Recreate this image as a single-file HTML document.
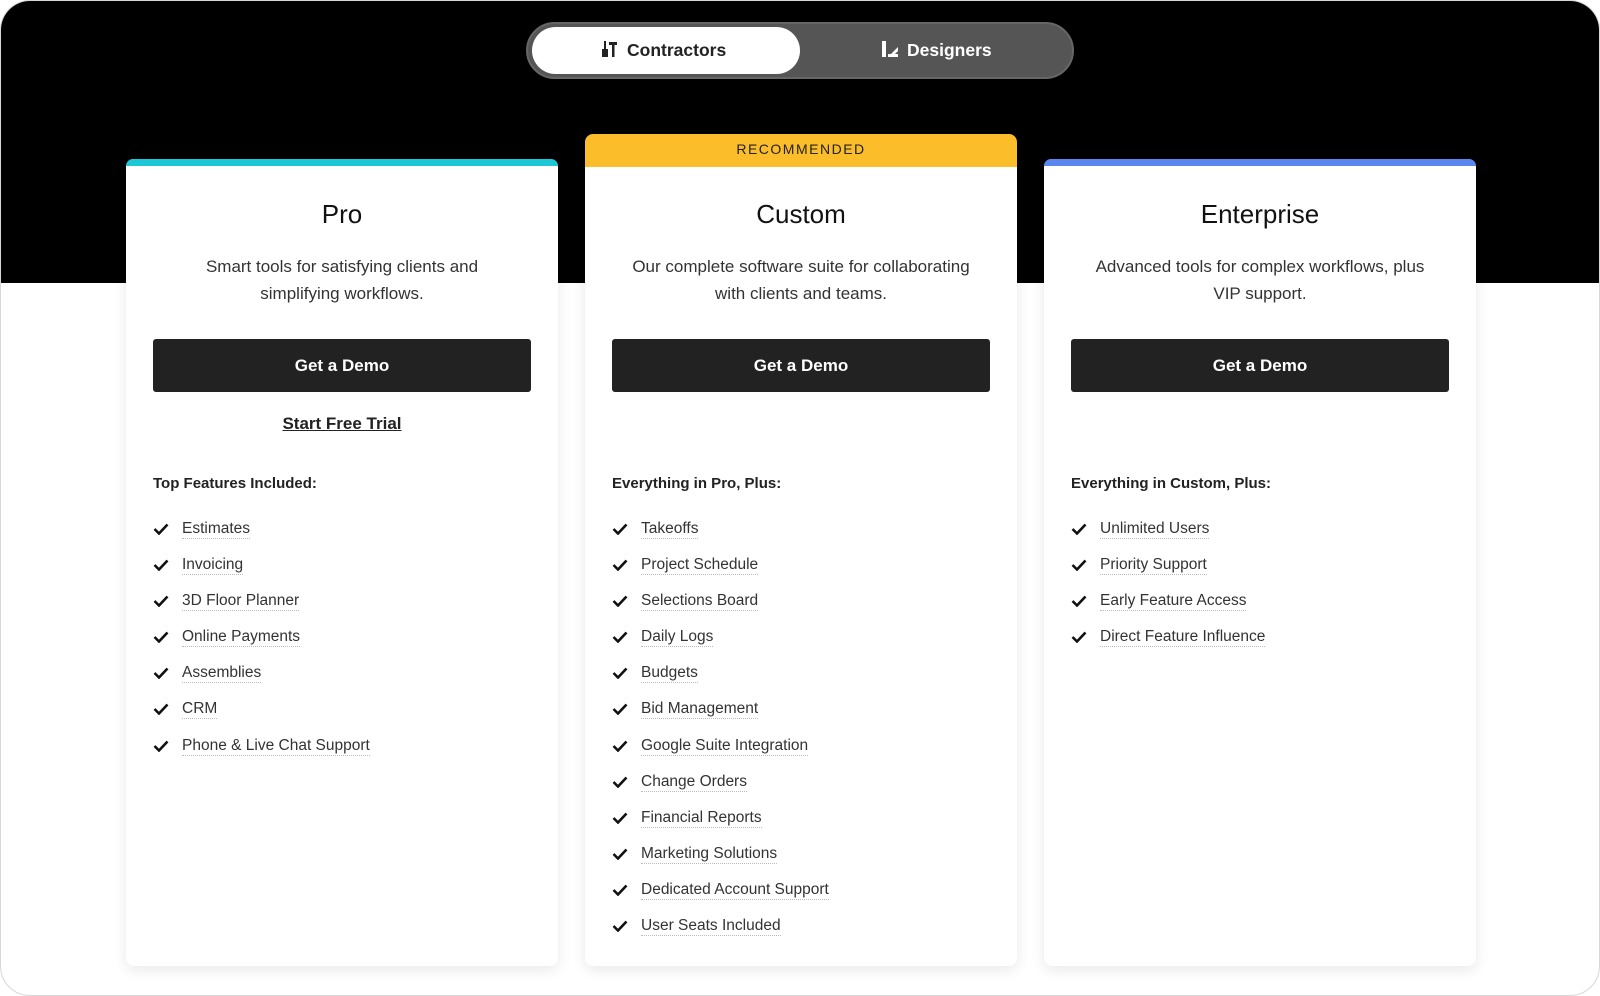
<!DOCTYPE html>
<html><head><meta charset="utf-8"><style>
*{margin:0;padding:0;box-sizing:border-box}
body{width:1600px;height:996px;background:#fff;font-family:"Liberation Sans",sans-serif;position:relative;overflow:hidden;color:#222}
.frame{position:absolute;left:0;top:0;width:1600px;height:996px;border:1px solid #d8d8d8;border-radius:30px;overflow:hidden;background:#fff}
.black{position:absolute;left:0;top:0;width:1600px;height:282px;background:#000}
.tog{position:absolute;left:525px;top:21px;width:548px;height:57px;background:#555;border-radius:29px;border:2px solid #666}
.pill{position:absolute;left:4px;top:3px;width:268px;height:47px;background:#fff;border-radius:24px}
.tl{position:absolute;top:0;height:53px;line-height:53px;font-size:17.5px;font-weight:bold}
.card{position:absolute;top:158px;width:432px;height:807px;background:#fff;border-radius:8px;box-shadow:0 4px 14px rgba(0,0,0,.09)}
.bar{position:absolute;left:0;top:0;width:100%;height:7px;border-radius:8px 8px 0 0}
.rec{position:absolute;left:0;top:-25px;width:100%;height:33px;background:#fbbd2a;border-radius:8px 8px 0 0;text-align:center;line-height:31px;font-size:14px;letter-spacing:1.5px;color:#222}
.t{position:absolute;left:0;width:100%;top:40px;text-align:center;font-size:26px;color:#111}
.d{position:absolute;left:10px;right:10px;top:94px;text-align:center;font-size:17px;line-height:27px;color:#333}
.btn{position:absolute;left:27px;width:378px;top:180px;height:53px;background:#222;border-radius:3px;color:#fff;font-weight:bold;font-size:17px;text-align:center;line-height:53px}
.tr{position:absolute;left:0;width:100%;top:255px;text-align:center;font-size:17px;font-weight:bold;text-decoration:underline;color:#222}
.h{position:absolute;left:27px;top:316px;font-size:15px;font-weight:bold;color:#222}
ul{position:absolute;left:27px;top:358px;list-style:none}
li{height:36.1px;font-size:15.5px;color:#333;position:relative;padding-left:29px;line-height:24px}
li span{border-bottom:1px dotted #bbb;padding-bottom:1px}
li svg{position:absolute;left:0;top:6px}
</style></head><body>
<div class="frame">
<div class="black"></div>
<div class="tog"><div class="pill"></div>
<div class="tl" style="left:72px;color:#222"><svg width="18" height="18" viewBox="0 0 18 18" style="vertical-align:-2px;margin-right:9px"><rect x="2" y="9" width="6" height="8" fill="#222"/><rect x="4" y="1" width="2" height="8" fill="#222"/><rect x="9" y="2" width="8" height="3" fill="#222"/><rect x="12" y="4" width="2.5" height="13" fill="#222"/></svg>Contractors</div>
<div class="tl" style="left:353px;color:#fff"><svg width="18" height="18" viewBox="0 0 18 18" style="vertical-align:-2px;margin-right:8px"><rect x="1" y="1" width="4" height="16" fill="#fff"/><path d="M7 17 L17 7 L17 11 L11 17Z" fill="#fff"/><rect x="7" y="14" width="10" height="3" fill="#fff"/></svg>Designers</div>
</div>

<div class="card" style="left:125px"><div class="bar" style="background:#1cc8d6"></div>
<div class="t">Pro</div><div class="d">Smart tools for satisfying clients and<br>simplifying workflows.</div>
<div class="btn">Get a Demo</div><div class="tr">Start Free Trial</div>
<div class="h">Top Features Included:</div>
<ul>
<li><svg width="16" height="12" viewBox="0 0 16 12"><path d="M1.5 6 L6 10.5 L14.5 1.5" stroke="#111" stroke-width="2.6" fill="none"/></svg><span>Estimates</span></li>
<li><svg width="16" height="12" viewBox="0 0 16 12"><path d="M1.5 6 L6 10.5 L14.5 1.5" stroke="#111" stroke-width="2.6" fill="none"/></svg><span>Invoicing</span></li>
<li><svg width="16" height="12" viewBox="0 0 16 12"><path d="M1.5 6 L6 10.5 L14.5 1.5" stroke="#111" stroke-width="2.6" fill="none"/></svg><span>3D Floor Planner</span></li>
<li><svg width="16" height="12" viewBox="0 0 16 12"><path d="M1.5 6 L6 10.5 L14.5 1.5" stroke="#111" stroke-width="2.6" fill="none"/></svg><span>Online Payments</span></li>
<li><svg width="16" height="12" viewBox="0 0 16 12"><path d="M1.5 6 L6 10.5 L14.5 1.5" stroke="#111" stroke-width="2.6" fill="none"/></svg><span>Assemblies</span></li>
<li><svg width="16" height="12" viewBox="0 0 16 12"><path d="M1.5 6 L6 10.5 L14.5 1.5" stroke="#111" stroke-width="2.6" fill="none"/></svg><span>CRM</span></li>
<li><svg width="16" height="12" viewBox="0 0 16 12"><path d="M1.5 6 L6 10.5 L14.5 1.5" stroke="#111" stroke-width="2.6" fill="none"/></svg><span>Phone &amp; Live Chat Support</span></li>
</ul></div>

<div class="card" style="left:584px"><div class="rec">RECOMMENDED</div>
<div class="t">Custom</div><div class="d">Our complete software suite for collaborating<br>with clients and teams.</div>
<div class="btn">Get a Demo</div>
<div class="h">Everything in Pro, Plus:</div>
<ul>
<li><svg width="16" height="12" viewBox="0 0 16 12"><path d="M1.5 6 L6 10.5 L14.5 1.5" stroke="#111" stroke-width="2.6" fill="none"/></svg><span>Takeoffs</span></li>
<li><svg width="16" height="12" viewBox="0 0 16 12"><path d="M1.5 6 L6 10.5 L14.5 1.5" stroke="#111" stroke-width="2.6" fill="none"/></svg><span>Project Schedule</span></li>
<li><svg width="16" height="12" viewBox="0 0 16 12"><path d="M1.5 6 L6 10.5 L14.5 1.5" stroke="#111" stroke-width="2.6" fill="none"/></svg><span>Selections Board</span></li>
<li><svg width="16" height="12" viewBox="0 0 16 12"><path d="M1.5 6 L6 10.5 L14.5 1.5" stroke="#111" stroke-width="2.6" fill="none"/></svg><span>Daily Logs</span></li>
<li><svg width="16" height="12" viewBox="0 0 16 12"><path d="M1.5 6 L6 10.5 L14.5 1.5" stroke="#111" stroke-width="2.6" fill="none"/></svg><span>Budgets</span></li>
<li><svg width="16" height="12" viewBox="0 0 16 12"><path d="M1.5 6 L6 10.5 L14.5 1.5" stroke="#111" stroke-width="2.6" fill="none"/></svg><span>Bid Management</span></li>
<li><svg width="16" height="12" viewBox="0 0 16 12"><path d="M1.5 6 L6 10.5 L14.5 1.5" stroke="#111" stroke-width="2.6" fill="none"/></svg><span>Google Suite Integration</span></li>
<li><svg width="16" height="12" viewBox="0 0 16 12"><path d="M1.5 6 L6 10.5 L14.5 1.5" stroke="#111" stroke-width="2.6" fill="none"/></svg><span>Change Orders</span></li>
<li><svg width="16" height="12" viewBox="0 0 16 12"><path d="M1.5 6 L6 10.5 L14.5 1.5" stroke="#111" stroke-width="2.6" fill="none"/></svg><span>Financial Reports</span></li>
<li><svg width="16" height="12" viewBox="0 0 16 12"><path d="M1.5 6 L6 10.5 L14.5 1.5" stroke="#111" stroke-width="2.6" fill="none"/></svg><span>Marketing Solutions</span></li>
<li><svg width="16" height="12" viewBox="0 0 16 12"><path d="M1.5 6 L6 10.5 L14.5 1.5" stroke="#111" stroke-width="2.6" fill="none"/></svg><span>Dedicated Account Support</span></li>
<li><svg width="16" height="12" viewBox="0 0 16 12"><path d="M1.5 6 L6 10.5 L14.5 1.5" stroke="#111" stroke-width="2.6" fill="none"/></svg><span>User Seats Included</span></li>
</ul></div>

<div class="card" style="left:1043px"><div class="bar" style="background:#5b86ee"></div>
<div class="t">Enterprise</div><div class="d">Advanced tools for complex workflows, plus<br>VIP support.</div>
<div class="btn">Get a Demo</div>
<div class="h">Everything in Custom, Plus:</div>
<ul>
<li><svg width="16" height="12" viewBox="0 0 16 12"><path d="M1.5 6 L6 10.5 L14.5 1.5" stroke="#111" stroke-width="2.6" fill="none"/></svg><span>Unlimited Users</span></li>
<li><svg width="16" height="12" viewBox="0 0 16 12"><path d="M1.5 6 L6 10.5 L14.5 1.5" stroke="#111" stroke-width="2.6" fill="none"/></svg><span>Priority Support</span></li>
<li><svg width="16" height="12" viewBox="0 0 16 12"><path d="M1.5 6 L6 10.5 L14.5 1.5" stroke="#111" stroke-width="2.6" fill="none"/></svg><span>Early Feature Access</span></li>
<li><svg width="16" height="12" viewBox="0 0 16 12"><path d="M1.5 6 L6 10.5 L14.5 1.5" stroke="#111" stroke-width="2.6" fill="none"/></svg><span>Direct Feature Influence</span></li>
</ul></div>
</div>
</body></html>
